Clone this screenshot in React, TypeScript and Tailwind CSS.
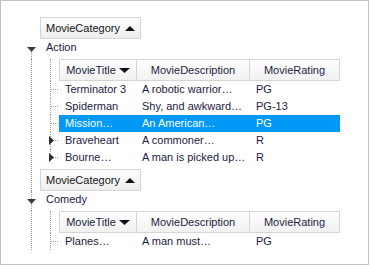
import type { ReactNode } from "react";

type Movie = {
  title: string;
  desc: string;
  rating: string;
  expandable?: boolean;
  selected?: boolean;
};

const ACTION: Movie[] = [
  { title: "Terminator 3", desc: "A robotic warrior…", rating: "PG" },
  { title: "Spiderman", desc: "Shy, and awkward…", rating: "PG-13" },
  { title: "Mission…", desc: "An American…", rating: "PG", selected: true },
  { title: "Braveheart", desc: "A commoner…", rating: "R", expandable: true },
  { title: "Bourne…", desc: "A man is picked up…", rating: "R", expandable: true },
];

const COMEDY: Movie[] = [{ title: "Planes…", desc: "A man must…", rating: "PG" }];

const DOT = "#9c9c9c";

function CategoryButton() {
  return (
    <div className="inline-flex h-[22px] items-center gap-[5px] border border-[#d6d6d6] bg-linear-to-b from-[#fcfcfc] to-[#efefef] px-[5px] text-[#141414]">
      <span>MovieCategory</span>
      <svg width="10" height="5" viewBox="0 0 10 5">
        <path d="M0 5 L5 0 L10 5 Z" fill="#111" />
      </svg>
    </div>
  );
}

function GroupRow({ label, lineAbove }: { label: string; lineAbove?: boolean }) {
  return (
    <div className="flex h-[20px]">
      <div className="flex w-[39px] shrink-0 flex-col">
        <div className={`ml-[30px] h-[8px] ${lineAbove ? "border-l border-dotted border-[#9c9c9c]" : ""}`} />
        <svg className="ml-[26px] block" width="9" height="5" viewBox="0 0 9 5">
          <path d="M0 0 L9 0 L4.5 5 Z" fill="#3d3d3d" />
        </svg>
        <div className="ml-[30px] flex-1 border-l border-dotted border-[#9c9c9c]" />
      </div>
      <span className="pl-[6px] leading-[17px] text-[#1d2140]">{label}</span>
    </div>
  );
}

function Connector({ last, expandable }: { last?: boolean; expandable?: boolean }) {
  return (
    <svg width="19" height="17" viewBox="0 0 19 17" className="block" shapeRendering="crispEdges">
      <line x1="10.5" y1="0" x2="10.5" y2={last ? 9 : 17} stroke={DOT} strokeDasharray="1 1" />
      <line x1="11" y1="8.5" x2="19" y2="8.5" stroke={DOT} strokeDasharray="1 1" />
      {expandable && <path d="M9 4 L14 8.5 L9 13 Z" fill="#2e2e2e" shapeRendering="auto" />}
    </svg>
  );
}

function MovieTable({ movies, open }: { movies: Movie[]; open?: boolean }) {
  return (
    <div className="flex">
      <div className="flex w-[19px] shrink-0 flex-col">
        <div className="ml-[10px] h-[22px] border-l border-dotted border-[#9c9c9c]" />
        {movies.map((m, i) => (
          <Connector key={m.title} expandable={m.expandable} last={!open && i === movies.length - 1} />
        ))}
      </div>
      <div className="w-[281px]">
        <div className="flex h-[22px] border border-[#d5d5d5] bg-linear-to-b from-[#ffffff] to-[#f1f1f1] text-[#221d45]">
          <div className="flex w-[76px] items-center justify-center gap-[3px]">
            <span>MovieTitle</span>
            <svg width="11" height="5" viewBox="0 0 11 5">
              <path d="M0 0 L11 0 L5.5 5 Z" fill="#111" />
            </svg>
          </div>
          <div className="flex w-[113px] items-center justify-center border-l border-[#d5d5d5]">
            MovieDescription
          </div>
          <div className="flex flex-1 items-center justify-center border-l border-[#d5d5d5]">
            MovieRating
          </div>
        </div>
        {movies.map((m) => (
          <div
            key={m.title}
            className={`flex h-[17px] items-center whitespace-nowrap ${
              m.selected ? "bg-[#0099f7] text-white" : "text-[#1d2140]"
            }`}
          >
            <div className="w-[77px] pl-[6px]">{m.title}</div>
            <div className="w-[113px] pl-[6px]">{m.desc}</div>
            <div className="flex-1 pl-[7px]">{m.rating}</div>
          </div>
        ))}
      </div>
    </div>
  );
}

function Branch({ children }: { children: ReactNode }) {
  return (
    <div className="flex">
      <div className="w-[39px] shrink-0">
        <div className="ml-[30px] h-full border-l border-dotted border-[#9c9c9c]" />
      </div>
      <div>{children}</div>
    </div>
  );
}

export default function App() {
  return (
    <div className="h-[266px] w-[370px] bg-white font-['Liberation_Sans',Arial,sans-serif] text-[11px]">
      <div className="h-[265px] w-[369px] overflow-hidden border border-[#c2c2c2] pt-[16px]">
        <div className="pl-[39px]">
          <CategoryButton />
        </div>
        <GroupRow label="Action" />
        <Branch>
          <MovieTable movies={ACTION} />
          <div className="mt-[3px]">
            <CategoryButton />
          </div>
        </Branch>
        <GroupRow label="Comedy" lineAbove />
        <Branch>
          <MovieTable movies={COMEDY} open />
        </Branch>
      </div>
    </div>
  );
}
